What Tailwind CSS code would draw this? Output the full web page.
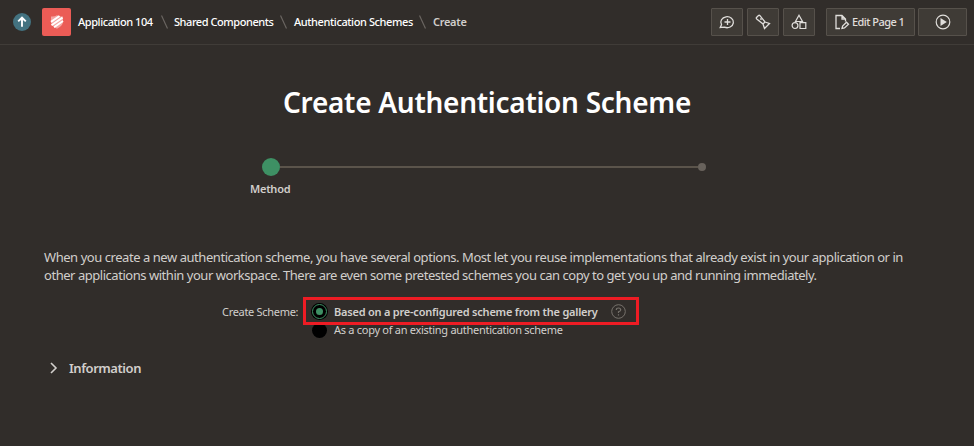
<!DOCTYPE html>
<html lang="en">
<head>
<meta charset="utf-8">
<title>Create Authentication Scheme</title>
<script src="https://cdn.jsdelivr.net/npm/@tailwindcss/browser@4"></script>
</head>
<body class="h-[446px] overflow-hidden bg-[#312d2a] font-['Noto_Sans','Open_Sans',sans-serif] text-[#d2cfcc] whitespace-nowrap">
<header class="flex h-[45px] items-center border-b border-[#403c38] pl-[13px] pr-[7px]">
  <svg class="size-[18px] shrink-0" viewBox="0 0 18 18" fill="none"><circle cx="9" cy="9" r="9" fill="#437280"/><path d="M9 13.800V5M5.200 8.400L9 4.700l3.800 3.700" stroke="#fff" stroke-width="1.900"/></svg>
  <div class="ml-[11px] flex h-7 w-[29px] shrink-0 items-center justify-center rounded-[2px] bg-[#eb5c56]">
    <svg class="h-[14px] w-[14px]" viewBox="0 0 14 14" fill="none"><path d="M1 1.500Q4 2 7 .300Q10 2 13 1.500V7Q12.500 11 7 13.800Q1.500 11 1 7Z" fill="#fff" fill-opacity=".45"/><path d="M1 6.800L9.500 1M1.500 10.200L12.500 2.600M4 12.300L13 6" stroke="#fff" stroke-width="2"/></svg>
  </div>
  <nav class="flex items-center text-[11px] leading-4 font-medium text-white">
    <span class="ml-[7px] w-[76px] tracking-[-0.42px]">Application 104</span>
    <svg class="ml-[7px] h-[14px] w-[7px]" viewBox="0 0 7 14"><path d="M.500 .500l6 13" stroke="#6b6662" stroke-width="1.200"/></svg>
    <span class="ml-[6px] w-[101px] tracking-[-0.45px]">Shared Components</span>
    <svg class="ml-[5px] h-[14px] w-[7px]" viewBox="0 0 7 14"><path d="M.500 .500l6 13" stroke="#6b6662" stroke-width="1.200"/></svg>
    <span class="ml-[7px] w-[120px] tracking-[-0.4px]">Authentication Schemes</span>
    <svg class="ml-[5px] h-[14px] w-[7px]" viewBox="0 0 7 14"><path d="M.500 .500l6 13" stroke="#6b6662" stroke-width="1.200"/></svg>
    <span class="ml-[7px] font-semibold tracking-[-0.3px] text-[#d2cfcc]">Create</span>
  </nav>
  <div class="ml-auto flex items-center text-[#e0dedb]">
    <button class="flex h-7 w-8 items-center justify-center rounded-[1px] border border-[#56514b] bg-[#3f3b36]"><svg class="size-4" viewBox="0 0 16 16" fill="none" stroke="currentColor" stroke-width="1.300"><path d="M1.200 13.500L2.500 10.700A6.300 5.500 0 1 1 5.500 13.200ZM8.500 5v6M5.500 8h6"/></svg></button>
    <button class="ml-1 flex h-7 w-8 items-center justify-center rounded-[1px] border border-[#56514b] bg-[#3f3b36]"><svg class="size-4" viewBox="0 0 16 16" fill="none" stroke="currentColor" stroke-width="1.300"><path d="M3.500 1.500L1.500 3.500Q1 4.200 1.700 4.900L8 10L9.500 14.500L14.500 9.500L10 8L5 1.700Q4.200 1 3.500 1.500ZM8 10L10 8M5.300 4.500l1.200 1.200"/></svg></button>
    <button class="ml-1 flex h-7 w-8 items-center justify-center rounded-[1px] border border-[#56514b] bg-[#3f3b36]"><svg class="size-4" viewBox="0 0 16 16" fill="none" stroke="currentColor" stroke-width="1.200"><path d="M8 1.300L11.500 7.500H4.500ZM9 8.700h5.800v5.800H9Z"/><circle cx="4" cy="11.600" r="2.900"/></svg></button>
    <button class="ml-[11px] flex h-7 w-[89px] items-center rounded-[1px] border border-[#56514b] bg-[#3f3b36] pl-[7px]"><svg class="size-4" viewBox="0 0 16 16" fill="none" stroke="currentColor" stroke-width="1.300"><path d="M6 14.500H2V1.500H8L11.500 5V7.500M8 1.500V5h3.500M8 14.500l.600-2.500L12.500 8.200l2 2L10.500 14Z"/></svg><span class="ml-[2px] text-[11px] leading-4 font-medium tracking-[-0.55px]">Edit Page 1</span></button>
    <button class="ml-[3px] flex h-7 w-[49px] items-center justify-center rounded-[1px] border border-[#56514b] bg-[#3f3b36]"><svg class="size-4" viewBox="0 0 16 16" fill="none"><circle cx="8" cy="8" r="6.800" stroke="currentColor" stroke-width="1.200"/><path d="M5.500 4L11.800 8L5.500 12Z" fill="currentColor"/></svg></button>
  </div>
</header>
<main class="px-11">
  <h1 class="mt-[37px] text-center text-[28px] leading-10 font-semibold tracking-[-0.28px] text-white">Create Authentication Scheme</h1>
  <section class="ml-[218px] mt-[36px] w-[447px]">
    <div class="flex items-center"><span class="size-[18px] rounded-full bg-[#3e9064]"></span><span class="h-[2px] flex-1 bg-[#5b544b]"></span><span class="mr-[3px] size-[8px] rounded-full bg-[#68625c]"></span></div>
    <p class="mt-[5px] -ml-[12px] text-[11px] leading-4 font-semibold tracking-[-0.25px]">Method</p>
  </section>
  <p class="mt-[51px] text-[13px] leading-[18px]"><span class="tracking-[-0.448px]">When you create a new authentication scheme, you have several options. Most let you reuse implementations that already exist in your application or in</span><br><span class="tracking-[-0.463px]">other applications within your workspace. There are even some pretested schemes you can copy to get you up and running immediately.</span></p>
  <section class="mt-[13px] flex text-[11px] leading-[18px]">
    <span class="mt-[6px] ml-[178px] w-[77px] tracking-[-0.3px]">Create Scheme:</span>
    <div class="ml-[4px] w-[336px]">
      <div class="relative z-10 flex h-[28px] items-center border-[3px] border-[#ed1c24] pt-px pl-[5px]">
        <span class="flex size-[17px] shrink-0 items-center justify-center rounded-full bg-black"><span class="flex size-[15px] items-center justify-center rounded-full border border-[#3e9064]"><span class="size-[7px] rounded-full bg-[#3e9064]"></span></span></span>
        <span class="ml-[6px] w-[265px] font-semibold tracking-[-0.22px]">Based on a pre-configured scheme from the gallery</span>
        <svg class="ml-[12px] size-[15px] shrink-0" viewBox="0 0 15 15" fill="none" stroke="#77726c"><circle cx="7.500" cy="7.500" r="6.800"/><path d="M5.300 6Q5.300 4 7.500 4T9.700 5.900Q9.700 7 7.500 7.700V9M7.500 10.200v1.300" stroke-width="1.200"/></svg>
      </div>
      <div class="-mt-[4px] flex h-[18px] items-center pl-[9px]"><span class="size-[15px] rounded-full bg-black"></span><span class="ml-[7px] tracking-[-0.28px]">As a copy of an existing authentication scheme</span></div>
    </div>
  </section>
  <section class="mt-[20px] flex items-center"><svg class="ml-[6px] h-[12px] w-[8px]" viewBox="0 0 8 12" fill="none"><path d="M1 1l5 5l-5 5" stroke="currentColor" stroke-width="1.600"/></svg><h2 class="ml-[11px] text-[13px] leading-[18px] font-semibold tracking-[-0.45px]">Information</h2></section>
</main>
</body>
</html>
